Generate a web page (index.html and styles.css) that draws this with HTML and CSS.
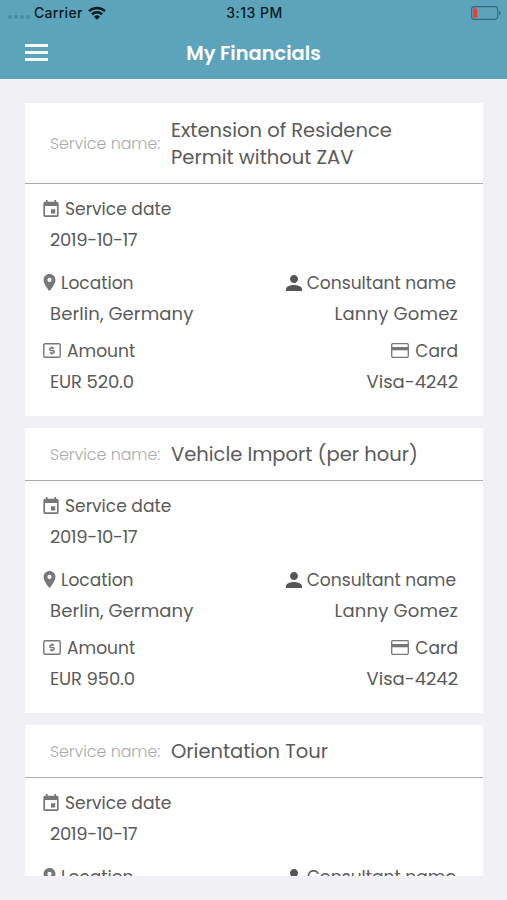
FILE: index.html
```html
<!DOCTYPE html>
<html lang="en">
    <head>
        <meta charset="UTF-8" />
        <meta name="viewport" content="width=device-width, initial-scale=1.0" />
        <title>My Financials</title>
        <link rel="stylesheet" href="styles.css">
    </head>
    <body>
        <!-- Icons used in the cards -->
        <svg class="sprite" width="0" height="0">
            <symbol id="icon-date" viewBox="3 1 18 20">
                <path d="M17 12h-5v5h5v-5zM16 1v2H8V1H6v2H5c-1.1 0-2 .9-2 2v14c0 1.100.9 2 2 2h14c1.100 0 2-.9 2-2V5c0-1.100-.9-2-2-2h-1V1h-2zm3 18H5V8h14v11z"/>
            </symbol>
            <symbol id="icon-place" viewBox="5 2 14 20">
                <path d="M12 2C8.130 2 5 5.130 5 9c0 5.250 7 13 7 13s7-7.750 7-13c0-3.870-3.130-7-7-7zm0 9.500a2.500 2.500 0 1 1 0-5 2.500 2.500 0 0 1 0 5z"/>
            </symbol>
            <symbol id="icon-person" viewBox="4 4 16 16">
                <path d="M12 12c2.210 0 4-1.790 4-4s-1.790-4-4-4-4 1.790-4 4 1.790 4 4 4zm0 2c-2.670 0-8 1.340-8 4v2h16v-2c0-2.660-5.330-4-8-4z"/>
            </symbol>
            <symbol id="icon-money" viewBox="0 0 18 15">
                <rect x=".8" y=".8" width="16.400" height="13.400" rx="1.200" fill="none" stroke="currentColor" stroke-width="1.400"/>
                <path d="M11.200 5H8a1.200 1.200 0 0 0 0 2.500h2a1.200 1.200 0 0 1 0 2.500H6.800M9 3.500V5m0 5v1.500" fill="none" stroke="currentColor" stroke-width="1.500"/>
            </symbol>
            <symbol id="icon-card" viewBox="0 0 18 15">
                <rect x=".7" y=".7" width="16.600" height="13.600" rx="1.200" fill="none" stroke="currentColor" stroke-width="1.300"/>
                <path d="M1 4h16v3.300H1z"/>
            </symbol>
        </svg>

        <header class="header">
            <div class="status-bar">
                <div class="status-left">
                    <span class="signal"><i></i><i></i><i></i><i></i></span>
                    <span class="carrier">Carrier</span>
                    <svg class="wifi" viewBox="0 0 18 14">
                        <path d="M1 5.200a11.500 11.500 0 0 1 16 0M3.900 8.300a7.300 7.300 0 0 1 10.200 0" fill="none" stroke="currentColor" stroke-width="2.500"/>
                        <path d="M9 13.800l3-3a4.300 4.300 0 0 0-6 0z"/>
                    </svg>
                </div>
                <div class="time">3:13 PM</div>
                <div class="status-right">
                    <svg class="battery" viewBox="0 0 30 14">
                        <rect x=".6" y=".6" width="26" height="12.800" rx="2.800" fill="none" stroke="#37697a" stroke-width="1.100"/>
                        <path d="M28 4.500c2 .8 2 4.200 0 5z" fill="#37697a"/>
                        <rect x="2.200" y="2.200" width="4" height="9.600" rx="1.300" fill="#f33b30"/>
                    </svg>
                </div>
            </div>
            <div class="nav">
                <button class="menu-btn" aria-label="Menu"><i></i><i></i><i></i></button>
                <h1>My Financials</h1>
            </div>
        </header>

        <main class="list">
            <section class="card">
                <div class="card-header">
                    <span class="caption">Service name:</span>
                    <h2>Extension of Residence<br>Permit without ZAV</h2>
                </div>
                <div class="card-body">
                    <div class="field wide">
                        <p class="label"><svg class="icon date"><use href="#icon-date"/></svg>Service date</p>
                        <p class="value day">2019-10-17</p>
                    </div>
                    <div class="field">
                        <p class="label"><svg class="icon place"><use href="#icon-place"/></svg>Location</p>
                        <p class="value city">Berlin, Germany</p>
                    </div>
                    <div class="field right">
                        <p class="label consultant"><svg class="icon person"><use href="#icon-person"/></svg>Consultant name</p>
                        <p class="value name">Lanny Gomez</p>
                    </div>
                    <div class="field">
                        <p class="label"><svg class="icon money"><use href="#icon-money"/></svg>Amount</p>
                        <p class="value price">EUR 520.0</p>
                    </div>
                    <div class="field right">
                        <p class="label"><svg class="icon money"><use href="#icon-card"/></svg>Card</p>
                        <p class="value">Visa-4242</p>
                    </div>
                </div>
            </section>

            <section class="card">
                <div class="card-header">
                    <span class="caption">Service name:</span>
                    <h2 class="single">Vehicle Import (per hour)</h2>
                </div>
                <div class="card-body">
                    <div class="field wide">
                        <p class="label"><svg class="icon date"><use href="#icon-date"/></svg>Service date</p>
                        <p class="value day">2019-10-17</p>
                    </div>
                    <div class="field">
                        <p class="label"><svg class="icon place"><use href="#icon-place"/></svg>Location</p>
                        <p class="value city">Berlin, Germany</p>
                    </div>
                    <div class="field right">
                        <p class="label consultant"><svg class="icon person"><use href="#icon-person"/></svg>Consultant name</p>
                        <p class="value name">Lanny Gomez</p>
                    </div>
                    <div class="field">
                        <p class="label"><svg class="icon money"><use href="#icon-money"/></svg>Amount</p>
                        <p class="value price">EUR 950.0</p>
                    </div>
                    <div class="field right">
                        <p class="label"><svg class="icon money"><use href="#icon-card"/></svg>Card</p>
                        <p class="value">Visa-4242</p>
                    </div>
                </div>
            </section>

            <section class="card">
                <div class="card-header">
                    <span class="caption">Service name:</span>
                    <h2 class="single">Orientation Tour</h2>
                </div>
                <div class="card-body">
                    <div class="field wide">
                        <p class="label"><svg class="icon date"><use href="#icon-date"/></svg>Service date</p>
                        <p class="value day">2019-10-17</p>
                    </div>
                    <div class="field">
                        <p class="label"><svg class="icon place"><use href="#icon-place"/></svg>Location</p>
                    </div>
                    <div class="field right">
                        <p class="label consultant"><svg class="icon person"><use href="#icon-person"/></svg>Consultant name</p>
                    </div>
                </div>
            </section>
        </main>
    </body>
</html>
```

FILE: styles.css
```css
* {
    box-sizing: border-box;
}

body {
    margin: 0;
    height: 900px;
    overflow: hidden;
    display: flex;
    flex-direction: column;
    background-color: #f0f0f5;
    color: #5a5a5a;
    font-family: Poppins, Inter, sans-serif;
}

h1,
h2,
p {
    margin: 0;
    font-weight: 400;
}

svg {
    fill: currentColor;
    flex-shrink: 0;
}

.sprite {
    position: absolute;
}

/* Header */
.header {
    height: 79px;
    flex-shrink: 0;
    background-color: #5ba4bc;
}

.status-bar {
    display: grid;
    grid-template-columns: 1fr auto 1fr;
    align-items: center;
    height: 26px;
    padding: 0 6px 0 8px;
    color: #0b1a20;
    font-family: Inter, sans-serif;
    font-size: 14px;
    line-height: 16px;
    font-weight: 500;
}

.status-left {
    display: flex;
    align-items: center;
}

.signal {
    display: flex;
    gap: 2px;
    margin: 8px 4px 0 0;
}

.signal i {
    width: 4px;
    height: 4px;
    border-radius: 50%;
    background-color: #4a8ca3;
}

.carrier {
    letter-spacing: 0.3px;
}

.wifi {
    width: 18px;
    height: 14px;
    margin-left: 5px;
}

.time {
    letter-spacing: 0.5px;
}

.status-right {
    display: flex;
    justify-content: flex-end;
}

.battery {
    width: 30px;
    height: 14px;
}

.nav {
    display: grid;
    grid-template-columns: 1fr auto 1fr;
    align-items: center;
    height: 53px;
    padding: 0 25px;
    color: #fff;
}

.menu-btn {
    display: flex;
    flex-direction: column;
    gap: 4px;
    width: 23px;
    padding: 0;
    border: none;
    background: none;
}

.menu-btn i {
    width: 23px;
    height: 3px;
    background-color: #f4fafc;
}

.nav h1 {
    padding-top: 2px;
    font-size: 19.4px;
    font-weight: 600;
}

/* Cards */
.list {
    display: flex;
    flex-direction: column;
    gap: 12px;
    height: 773px;
    margin: 24px 24px 0 25px;
    overflow: hidden;
}

.card {
    flex-shrink: 0;
    background-color: #fff;
}

.card-header {
    display: flex;
    align-items: center;
    padding: 14px 25px 12px;
    border-bottom: 1px solid #aaa;
}

.caption {
    width: 121px;
    margin-top: -2px;
    color: #aaa;
    font-size: 15.8px;
    font-weight: 300;
}

.card-header h2 {
    font-size: 19.5px;
    line-height: 27px;
}

.card-header .single {
    line-height: 26px;
}

.card-body {
    display: grid;
    grid-template-columns: 1fr 1fr;
    row-gap: 6px;
    padding: 9px 25px 19px 18px;
}

.wide {
    grid-column: 1 / 3;
    margin-bottom: 6px;
}

.label {
    display: flex;
    align-items: center;
    height: 31px;
    font-size: 17.1px;
}

.value {
    height: 31px;
    padding-left: 7px;
    font-size: 18px;
    line-height: 31px;
}

.day {
    letter-spacing: -0.4px;
}

.city {
    letter-spacing: 0.1px;
}

.name {
    letter-spacing: 0.2px;
}

.price {
    letter-spacing: -0.15px;
}

.right {
    text-align: right;
}

.right .label {
    justify-content: flex-end;
}

.right .consultant {
    padding-right: 2px;
}

.icon {
    color: #777;
}

.date {
    width: 16px;
    height: 17px;
    margin-right: 6px;
}

.place {
    width: 13px;
    height: 17px;
    margin-right: 5px;
}

.person {
    width: 16px;
    height: 16px;
    margin-right: 5px;
    color: #555;
}

.money {
    width: 18px;
    height: 15px;
    margin-right: 6px;
}
```
